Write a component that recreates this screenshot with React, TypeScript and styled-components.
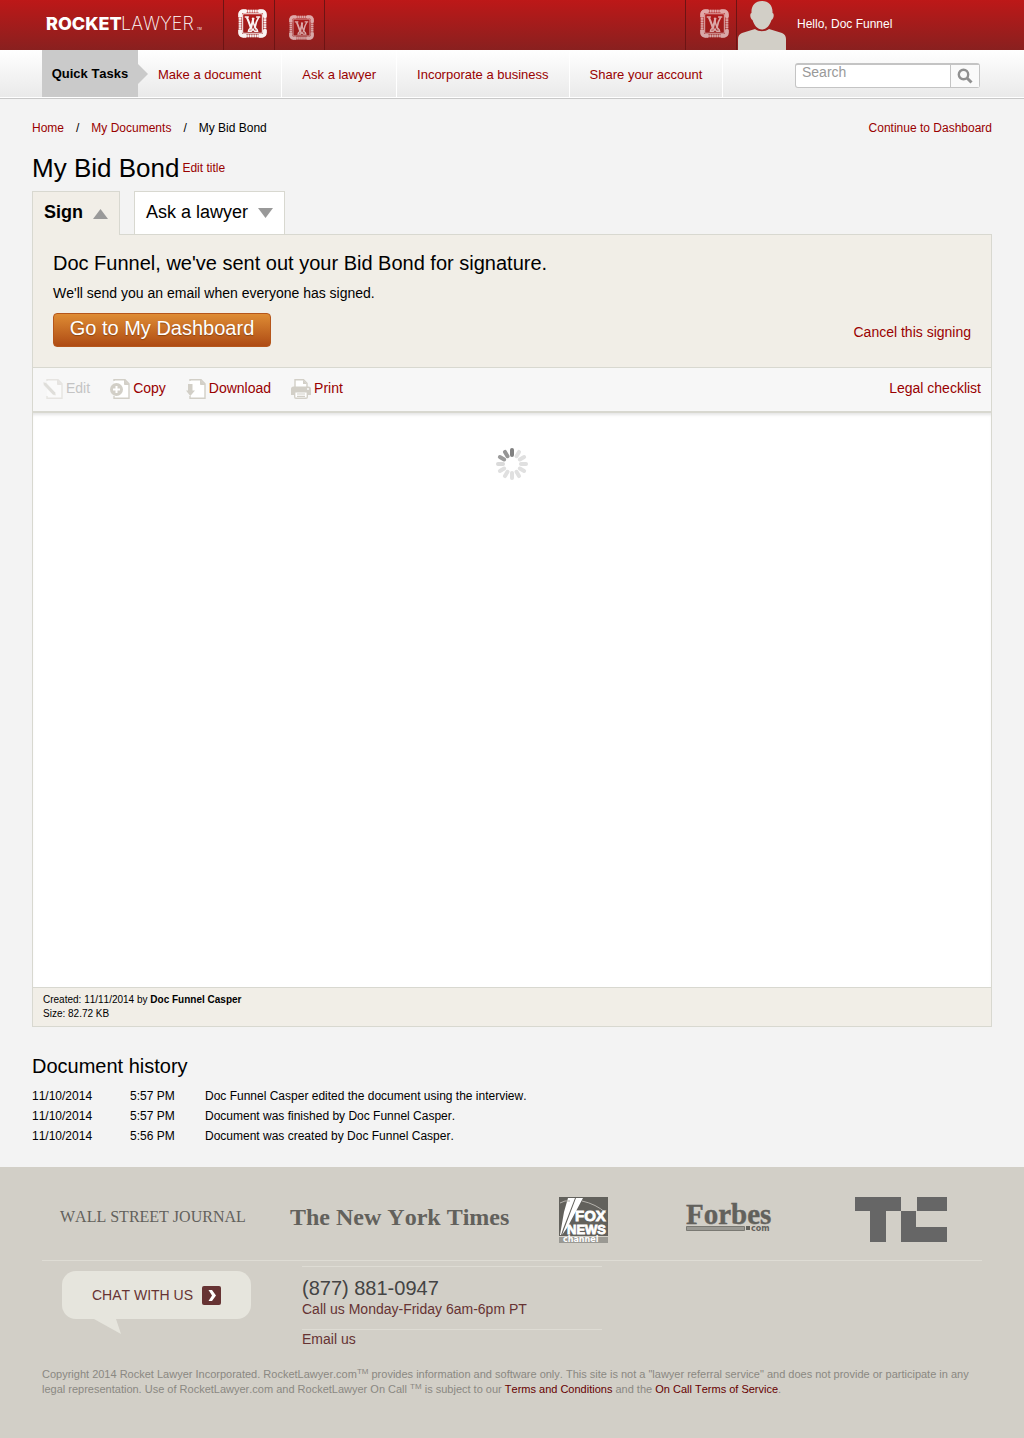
import React from "react";
import styled, { createGlobalStyle, css } from "styled-components";

const line = "#d8d8d0";
const cream = "#f1eee7";
const red = "#990000";
const maroon = "#663333";
const logoGray = "#62615c";

const GlobalStyle = createGlobalStyle`
  * { box-sizing: border-box; }
  body {
    margin: 0;
    background: #f3f3f3;
    color: #000;
    font: 12px/20px "Liberation Sans", Arial, sans-serif;
    font-kerning: none;
  }
  button, input { font-family: inherit; font-kerning: none; }
`;

const Link = styled.a`
  color: ${red};
  text-decoration: none;
  &:hover { text-decoration: underline; }
`;

/* ---------- Header ---------- */

const TopBar = styled.header`
  background: linear-gradient(#bd1818, #89201f);
`;

const Inner = styled.div`
  max-width: 940px;
  margin: 0 auto;
  display: flex;
`;

const BrandLink = styled.a`
  display: flex;
  align-items: center;
  width: 181px;
  height: 50px;
  padding: 0 0 2px 4px;
`;

const BadgeCell = styled.button<{ $faded?: boolean; $first?: boolean; $low?: boolean }>`
  display: flex;
  align-items: center;
  justify-content: center;
  width: ${(p) => (p.$first ? 52 : 50)}px;
  height: 50px;
  padding: ${(p) => (p.$low ? "4px 0 0 4px" : "0 0 3px 6px")};
  background: none;
  border: 0 solid #6d1414;
  border-left-width: ${(p) => (p.$first ? 1 : 0)}px;
  border-right-width: 1px;
  svg { opacity: ${(p) => (p.$faded ? 0.62 : 0.95)}; }
`;

const Account = styled.div`
  display: flex;
  margin-left: auto;
  width: 297px;
`;

const Greeting = styled.span`
  color: #fff;
  line-height: 48px;
  margin-left: 10px;
`;

const AvatarSvg = styled.svg`
  margin-left: 1px;
`;

/* ---------- Quick tasks ---------- */

const TaskBar = styled.nav`
  background: linear-gradient(#fff, #e9e9e9);
  border-bottom: 1px solid #c8c8c8;
  box-shadow: inset 0 -1px #fff;
  padding-bottom: 1px;
`;

const TaskLabel = styled.strong`
  position: relative;
  background: #cacaca;
  width: 96px;
  text-align: center;
  font-size: 13px;
  line-height: 47px;
  &::after {
    content: "";
    position: absolute;
    left: 100%;
    top: 14px;
    border: 10px solid transparent;
    border-left-color: #cacaca;
    border-right-width: 0;
  }
`;

const TaskLink = styled(Link)`
  padding: 0 20px;
  font-size: 13px;
  line-height: 49px;
  height: 47px;
  border-right: 1px solid #fff;
`;

const SearchForm = styled.form`
  display: flex;
  width: 185px;
  height: 25px;
  margin: 13px 2px 0 auto;
  border: 1px solid #c4c4c4;
  border-top-width: 2px;
  border-radius: 3px;
  background: #fff;
`;

const SearchInput = styled.input`
  flex: 1;
  min-width: 0;
  padding: 0 6px 8px;
  border: 0;
  background: none;
  font-size: 14px;
  outline-offset: 2px;
  &::placeholder { color: #999; opacity: 1; }
`;

const SearchButton = styled.button`
  display: flex;
  align-items: center;
  justify-content: center;
  width: 29px;
  padding: 0;
  border: 0;
  border-left: 1px solid #c4c4c4;
  background: #fafafa;
`;

/* ---------- Document page ---------- */

const Main = styled.main`
  max-width: 960px;
  margin: 0 auto;
  padding: 19px 0 21px;
`;

const Crumbs = styled.nav`
  display: flex;
  gap: 12px;
  & > :last-child { margin-left: auto; }
`;

const TitleRow = styled.div`
  display: flex;
  align-items: center;
  gap: 3px;
  margin-top: 15px;
`;

const Title = styled.h1`
  margin: 0;
  font-size: 26px;
  line-height: 30px;
  font-weight: normal;
`;

const Tabs = styled.div`
  display: flex;
  gap: 14px;
  margin-top: 8px;
`;

const Tab = styled.button<{ $active?: boolean }>`
  display: flex;
  align-items: center;
  gap: 10px;
  height: 43px;
  padding: 0 11px 2px;
  border: 1px solid ${line};
  border-bottom: 0;
  background: #fff;
  color: #000;
  font-size: 18px;
  svg { margin-top: 2px; }
  ${(p) =>
    p.$active &&
    css`
      position: relative;
      height: 44px;
      margin-bottom: -1px;
      font-weight: bold;
      background: ${cream};
    `}
`;

const Panel = styled.section`
  border: 1px solid ${line};
`;

const SignArea = styled.div`
  padding: 16px 20px 20px;
  background: ${cream};
`;

const Heading = styled.h2`
  margin: 0;
  font-size: 20px;
  line-height: 24px;
  font-weight: normal;
`;

const Note = styled.p`
  margin: 8px 0 10px;
  font-size: 14px;
  line-height: 20px;
`;

const SignActions = styled.div`
  display: flex;
  align-items: center;
  justify-content: space-between;
  font-size: 14px;
`;

const DashboardButton = styled.button`
  height: 34px;
  width: 218px;
  padding: 0 0 3px;
  border: 1px solid #b5561b;
  border-radius: 4px;
  background: linear-gradient(#de8c34, #ae4b14);
  color: #fff;
  font-size: 20px;
  text-shadow: 0 1px 1px rgba(90, 40, 0, 0.5);
`;

const CancelLink = styled(Link)`
  padding-top: 4px;
`;

const Toolbar = styled.div`
  display: flex;
  align-items: flex-start;
  gap: 20px;
  height: 46px;
  padding: 11px 10px 0;
  border-top: 1px solid ${line};
  border-bottom: 2px solid ${line};
  background: #f7f7f7;
  font-size: 14px;
  line-height: 18px;
  & > :last-child { margin-left: auto; }
`;

const ToolLink = styled(Link)<{ $disabled?: boolean }>`
  display: flex;
  gap: 3px;
  ${(p) =>
    p.$disabled &&
    css`
      color: #c4c4c4;
      svg { opacity: 0.45; }
    `}
`;

const Viewer = styled.div`
  display: flex;
  justify-content: center;
  align-items: flex-start;
  min-height: 574px;
  padding-top: 35px;
  background: #fff;
  box-shadow: inset 0 3px 3px -1px #e6e6e6;
`;

const Meta = styled.div`
  padding: 5px 10px;
  border-top: 1px solid ${line};
  background: ${cream};
  font-size: 10px;
  line-height: 14px;
`;

const History = styled.section`
  margin-top: 27px;
`;

const HistoryTable = styled.table`
  width: 100%;
  margin-top: 8px;
  border-collapse: collapse;
  table-layout: fixed;
  td { padding: 0; }
  td:nth-child(1) { width: 98px; }
  td:nth-child(2) { width: 75px; }
`;

/* ---------- Footer ---------- */

const Footer = styled.footer`
  padding-bottom: 41px;
  background: #d2cfc7;
`;

const FooterInner = styled.div`
  max-width: 940px;
  margin: 0 auto;
`;

const Press = styled.div`
  display: grid;
  grid-template-columns: 230fr 269fr 127fr 169fr 127fr;
  align-items: center;
  height: 94px;
  padding: 12px 0 0 18px;
  border-bottom: 1px solid #dedcd4;
`;

const PressLogo = styled.svg`
  display: block;
  overflow: visible;
`;

const Contact = styled.div`
  display: flex;
  align-items: flex-start;
  gap: 51px;
  padding-left: 20px;
`;

const Chat = styled.a`
  position: relative;
  display: flex;
  align-items: center;
  justify-content: center;
  gap: 9px;
  width: 189px;
  height: 48px;
  margin-top: 10px;
  border-radius: 14px;
  background: #e6e5dd;
  color: ${maroon};
  font-size: 14px;
  text-decoration: none;
`;

const ChatTail = styled.svg`
  position: absolute;
  left: 32px;
  top: 100%;
`;

const Lines = styled.div`
  width: 300px;
  margin-top: 5px;
  border-top: 1px solid #dedcd4;
  padding-top: 9px;
`;

const Phone = styled.div`
  color: #444;
  font-size: 20px;
  line-height: 24px;
`;

const ContactLink = styled(Link)<{ $ruled?: boolean }>`
  display: block;
  color: ${maroon};
  font-size: 14px;
  line-height: 18px;
  ${(p) =>
    p.$ruled &&
    css`
      margin-top: 11px;
      border-top: 1px solid #dedcd4;
    `}
`;

const Legal = styled.p`
  margin: 19px 0 0;
  color: #8a8882;
  font-size: 11px;
  line-height: 15px;
  a { color: #660000; }
`;

const Mark = styled.sup`
  font-size: 8px;
  line-height: 0;
  vertical-align: 4px;
`;

/* ---------- Drawings ---------- */

const Wordmark = () => (
  <svg width="160" height="20" viewBox="0 0 160 20" role="img" aria-label="Rocket Lawyer">
    <g fill="#fff" fontFamily="Inter, sans-serif">
      <path d="M0 3h6v2H2z" />
      <text x="0" y="16" fontSize="18" fontWeight="800">ROCKET</text>
      <text x="75" y="16" fontSize="18" fontWeight="200">LAWYER</text>
      <text x="151" y="16" fontSize="3">TM</text>
    </g>
  </svg>
);

const Badge = ({ size }: { size: number }) => (
  <svg width={size} height={size} viewBox="0 0 28 28" fill="none" stroke="#fff" aria-hidden="true">
    <rect x="4.500" y="4.500" width="19" height="19" rx="1" strokeWidth="1" />
    <rect x="2" y="2" width="24" height="24" rx="3" strokeWidth="2.600" strokeOpacity=".45" />
    <rect x="2" y="2" width="24" height="24" rx="3" strokeWidth="2.600" strokeDasharray="1.500 .8" />
    <path d="M2 8V5a3 3 0 0 1 3-3h3M20 2h3a3 3 0 0 1 3 3v3M26 20v3a3 3 0 0 1-3 3h-3M8 26H5a3 3 0 0 1-3-3v-3" strokeWidth="3.600" />
    <path d="M6.500 7.700h4M17.500 7.700h4" strokeWidth="1.300" />
    <path d="M8.500 8c1.500 3 2.500 6 4 10.500L15 8.500" strokeWidth="2" />
    <path d="M14 8.500c.5 4 1 6 2.500 9.500C17 14 18 11 20 8" strokeWidth="1.500" />
    <path d="M13 17.500c-1 1-3 2-3 4h3c1-.5 1-1.500 1.500-2.500.5 1 .5 2 1.500 2.500h3c0-2-2-3-3-4" strokeWidth="1.300" />
  </svg>
);

const Avatar = () => (
  <AvatarSvg width="49" height="50" viewBox="0 0 49 50" fill="#d2cfc7" aria-hidden="true">
    <path d="M24 1c7 0 11 5 10.500 12 2 0 1.500 6-1 7-1.500 5-5 9.500-9.500 9.500S16 25 14.500 20c-2.500-1-3-7-1-7C13 6 17 1 24 1z" />
    <path d="M0 50V39c0-3 1.500-5 4-6l13-4c4 3 10 3 14 0l13 4c2.500 1 4 3 4 6v11z" />
  </AvatarSvg>
);

const SearchGlyph = () => (
  <svg width="16" height="16" viewBox="0 0 16 16" fill="none" stroke="#909090" aria-hidden="true">
    <circle cx="6.500" cy="6.500" r="4.700" strokeWidth="2.400" />
    <path d="M10 10l4.500 4.500" strokeWidth="3" />
  </svg>
);

const Arrow = ({ up }: { up?: boolean }) => (
  <svg width="15" height="10" viewBox="0 0 15 10" fill="#999" aria-hidden="true">
    <path d={up ? "M0 10 7.500 0 15 10z" : "M0 0h15L7.500 10z"} />
  </svg>
);

const Sheet = () => (
  <path d="M4 2V.8h11l4 4V19.300H4V17" fill="#fff" stroke="#d2cfc7" strokeWidth="1.400" />
);

const Fold = () => <path d="M14.500 1v4.500H19" fill="#d2cfc7" stroke="#d2cfc7" />;

const ToolIcon = ({ name }: { name: string }) => (
  <svg width="20" height="20" viewBox="0 0 20 20" aria-hidden="true">
    {name !== "Print" && (
      <>
        <Sheet />
        <Fold />
      </>
    )}
    {name === "Edit" && (
      <path d="M0 3l3 .5 9.500 10 .5 3-3-.5L.5 6z" fill="#c4c1b8" stroke="#fff" strokeWidth=".5" />
    )}
    {name === "Copy" && (
      <>
        <circle cx="6.500" cy="10.500" r="6.500" fill="#d2cfc7" />
        <path d="M6.500 7v7M3 10.500h7" stroke="#fff" strokeWidth="2" />
      </>
    )}
    {name === "Download" && <path d="M2 5h4.500v6.500H9L4.300 17 0 11.500h2z" fill="#d2cfc7" />}
    {name === "Print" && (
      <>
        <path d="M4 8V.8h8.500L16 4.300V8" fill="#fff" stroke="#d2cfc7" strokeWidth="1.400" />
        <path d="M12 1v4h4" fill="#d2cfc7" />
        <path d="M0 10q0-2.500 2.500-2.500h15Q20 7.500 20 10v6h-3v-3H3v3H0z" fill="#d2cfc7" />
        <path d="M3.700 12.700h12.600v5.300q0 1.300-1.300 1.300H5q-1.300 0-1.300-1.300z" fill="#fff" stroke="#d2cfc7" strokeWidth="1.400" />
        <path d="M6 15h8M6 17.300h8" stroke="#d2cfc7" strokeWidth="1.200" />
        <circle cx="17" cy="10" r=".9" fill="#fff" />
      </>
    )}
  </svg>
);

const spokeColors = ["#808080", "#e0e0e0", "#e0e0e0", "#e0e0e0", "#e0e0e0", "#e0e0e0", "#e0e0e0", "#e0e0e0", "#e0e0e0", "#dadada", "#9c9c9c", "#959595"];

const Spinner = () => (
  <svg width="32" height="32" viewBox="-16 -16 32 32" role="img" aria-label="Loading">
    {spokeColors.map((color, i) => (
      <rect key={i} x="-2" y="-16" width="4" height="9" rx="2" fill={color} transform={`rotate(${i * 30})`} />
    ))}
  </svg>
);

const serif = '"Liberation Serif", "Times New Roman", serif';
const sans = '"Liberation Sans", Arial, sans-serif';

const PressLogos = () => (
  <Press>
    <PressLogo width="188" height="30">
      <text x="0" y="17" fontFamily={serif} fontSize="16" fill={logoGray}>WALL STREET JOURNAL</text>
    </PressLogo>
    <PressLogo width="214" height="34">
      <text x="0" y="22" fontFamily={serif} fontSize="24" fontWeight="bold" fill={logoGray}>The New York Times</text>
    </PressLogo>
    <PressLogo width="49" height="46" viewBox="0 0 49 46">
      <path d="M0 0h49v39H0z" fill={logoGray} />
      <path d="M0 40h49v6H0z" fill="#9a9993" />
      <path d="M9 1h7L4 32 2 38H1L5 15zM17 1h7L8 31 3 38z" fill="#fff" />
      <path d="M1 6Q6 3 11 4M23 4q14 3 24 12" fill="none" stroke="#b5b3ad" />
      <g fill="#fff" fontWeight="bold">
        <text x="16" y="24" fontFamily={sans} fontSize="15" stroke="#fff" strokeWidth=".8">FOX</text>
        <text x="8" y="37" fontFamily={sans} fontSize="13" stroke="#fff" strokeWidth=".8">NEWS</text>
        <text x="4" y="45" fontFamily="DejaVu Sans, sans-serif" fontSize="8">channel</text>
      </g>
    </PressLogo>
    <PressLogo width="86" height="34" viewBox="0 0 86 34">
      <text x="0" y="21" fontFamily={serif} fontSize="29" fontWeight="bold" fill={logoGray} stroke={logoGray} strokeWidth=".4">Forbes</text>
      <path d="M.500 23.500h58v4H.500z" fill="#9a9993" stroke="#7a7973" />
      <path d="M60 23h4v4h-4z" fill={logoGray} />
      <text x="65" y="28" fontFamily="DejaVu Sans, sans-serif" fontSize="8" fontWeight="bold" fill={logoGray}>com</text>
    </PressLogo>
    <PressLogo width="92" height="45" viewBox="0 0 92 45" fill="#666" role="img" aria-label="TechCrunch">
      <path d="M0 0h46v14H31v31H15V14H0zM62 0h30v14H62zM46 14h15v16h31v15H46z" />
    </PressLogo>
  </Press>
);

/* ---------- Page ---------- */

const tasks = ["Make a document", "Ask a lawyer", "Incorporate a business", "Share your account"];
const tools = ["Edit", "Copy", "Download", "Print"];
const events = [
  ["11/10/2014", "5:57 PM", "Doc Funnel Casper edited the document using the interview."],
  ["11/10/2014", "5:57 PM", "Document was finished by Doc Funnel Casper."],
  ["11/10/2014", "5:56 PM", "Document was created by Doc Funnel Casper."],
];

export default function App() {
  return (
    <>
      <GlobalStyle />
      <TopBar>
        <Inner>
          <BrandLink href="#"><Wordmark /></BrandLink>
          <BadgeCell type="button" $first aria-label="Documents"><Badge size={29} /></BadgeCell>
          <BadgeCell type="button" $faded $low aria-label="Lawyers"><Badge size={25} /></BadgeCell>
          <Account>
            <BadgeCell type="button" $first $faded aria-label="Notifications"><Badge size={29} /></BadgeCell>
            <Avatar />
            <Greeting>Hello, Doc Funnel</Greeting>
          </Account>
        </Inner>
      </TopBar>
      <TaskBar>
        <Inner>
          <TaskLabel>Quick Tasks</TaskLabel>
          {tasks.map((task) => <TaskLink key={task} href="#">{task}</TaskLink>)}
          <SearchForm onSubmit={(e) => e.preventDefault()}>
            <SearchInput type="text" placeholder="Search" aria-label="Search" />
            <SearchButton type="submit" aria-label="Submit search"><SearchGlyph /></SearchButton>
          </SearchForm>
        </Inner>
      </TaskBar>

      <Main>
        <Crumbs>
          <Link href="#">Home</Link>
          <span>/</span>
          <Link href="#">My Documents</Link>
          <span>/</span>
          <span>My Bid Bond</span>
          <Link href="#">Continue to Dashboard</Link>
        </Crumbs>
        <TitleRow>
          <Title>My Bid Bond</Title>
          <Link href="#">Edit title</Link>
        </TitleRow>
        <Tabs>
          <Tab type="button" $active>Sign<Arrow up /></Tab>
          <Tab type="button">Ask a lawyer<Arrow /></Tab>
        </Tabs>
        <Panel>
          <SignArea>
            <Heading>Doc Funnel, we've sent out your Bid Bond for signature.</Heading>
            <Note>We'll send you an email when everyone has signed.</Note>
            <SignActions>
              <DashboardButton type="button">Go to My Dashboard</DashboardButton>
              <CancelLink href="#">Cancel this signing</CancelLink>
            </SignActions>
          </SignArea>
          <Toolbar>
            {tools.map((tool) => (
              <ToolLink key={tool} href="#" $disabled={tool === "Edit"} aria-disabled={tool === "Edit"}>
                <ToolIcon name={tool} />
                {tool}
              </ToolLink>
            ))}
            <Link href="#">Legal checklist</Link>
          </Toolbar>
          <Viewer><Spinner /></Viewer>
          <Meta>
            <div>Created: 11/11/2014 by <strong>Doc Funnel Casper</strong></div>
            <div>Size: 82.72 KB</div>
          </Meta>
        </Panel>
        <History>
          <Heading>Document history</Heading>
          <HistoryTable>
            <tbody>
              {events.map((row) => (
                <tr key={row[2]}>{row.map((cell) => <td key={cell}>{cell}</td>)}</tr>
              ))}
            </tbody>
          </HistoryTable>
        </History>
      </Main>

      <Footer>
        <FooterInner>
          <PressLogos />
          <Contact>
            <Chat href="#">
              CHAT WITH US
              <svg width="19" height="19" viewBox="0 0 19 19" aria-hidden="true">
                <rect width="19" height="19" rx="2" fill={maroon} />
                <path d="M6.500 4h3.500l4 5.500-4 5.500H6.500l3.500-5.500z" fill="#fff" />
              </svg>
              <ChatTail width="28" height="16" viewBox="0 0 28 16" aria-hidden="true">
                <path d="M0 0h22l5 15z" fill="#e6e5dd" />
              </ChatTail>
            </Chat>
            <Lines>
              <Phone>(877) 881-0947</Phone>
              <ContactLink href="#">Call us Monday-Friday 6am-6pm PT</ContactLink>
              <ContactLink href="#" $ruled>Email us</ContactLink>
            </Lines>
          </Contact>
          <Legal>
            Copyright 2014 Rocket Lawyer Incorporated. RocketLawyer.com<Mark>TM</Mark> provides information and software
            only. This site is not a "lawyer referral service" and does not provide or participate in any legal
            representation. Use of RocketLawyer.com and RocketLawyer On Call <Mark>TM</Mark> is subject to
            our <Link href="#">Terms and Conditions</Link> and the <Link href="#">On Call Terms of Service</Link>.
          </Legal>
        </FooterInner>
      </Footer>
    </>
  );
}
